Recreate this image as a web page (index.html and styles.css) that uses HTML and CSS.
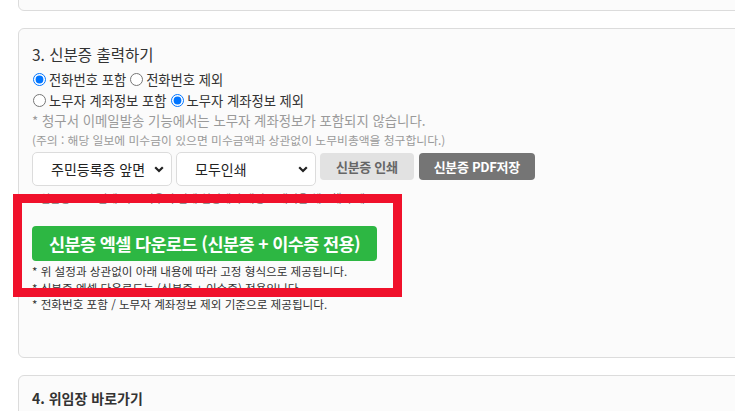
FILE: index.html
```html
<!DOCTYPE html>
<html lang="ko">
<head>
<meta charset="utf-8">
<link rel="stylesheet" href="styles.css">
</head>
<body>
<div class="page">
  <div class="card card-prev"></div>

  <div class="card">
    <h3 class="title">3. 신분증 출력하기</h3>
    <div class="radio-row">
      <label><input type="radio" name="tel" checked>전화번호 포함</label>
      <label><input type="radio" name="tel">전화번호 제외</label>
    </div>
    <div class="radio-row">
      <label><input type="radio" name="acc">노무자 계좌정보 포함</label>
      <label><input type="radio" name="acc" checked>노무자 계좌정보 제외</label>
    </div>
    <p class="note-gray">* 청구서 이메일발송 기능에서는 노무자 계좌정보가 포함되지 않습니다.</p>
    <p class="note-small">(주의 : 해당 일보에 미수금이 있으면 미수금액과 상관없이 노무비총액을 청구합니다.)</p>
    <div class="controls">
      <div class="select">
        <span>주민등록증 앞면</span>
        <svg width="10" height="7" viewBox="0 0 10 7"><path d="M1.2 1.2 L5 5 L8.8 1.2" fill="none" stroke="#222" stroke-width="2.2"/></svg>
      </div>
      <div class="select">
        <span>모두인쇄</span>
        <svg width="10" height="7" viewBox="0 0 10 7"><path d="M1.2 1.2 L5 5 L8.8 1.2" fill="none" stroke="#222" stroke-width="2.2"/></svg>
      </div>
      <button class="btn btn-light">신분증 인쇄</button>
      <button class="btn btn-dark">신분증 PDF저장</button>
    </div>
    <p class="note-hidden">* 신분증 PDF 인쇄 시 브라우저 인쇄 설정에서 배경 그래픽을 체크해 주세요.</p>
    <button class="btn-green">신분증 엑셀 다운로드 (신분증 + 이수증 전용)</button>
    <div class="notes">
      <p>* 위 설정과 상관없이 아래 내용에 따라 고정 형식으로 제공됩니다.</p>
      <p>* 신분증 엑셀 다운로드는 (신분증 + 이수증) 전용입니다.</p>
      <p>* 전화번호 포함 / 노무자 계좌정보 제외 기준으로 제공됩니다.</p>
    </div>
  </div>

  <div class="card">
    <h3 class="title-bold">4. 위임장 바로가기</h3>
  </div>

  <div class="highlight"></div>
</div>
</body>
</html>
```

FILE: styles.css
```css
* { box-sizing: border-box; }
html, body {
  margin: 0;
  padding: 0;
  background: #fff;
  overflow: hidden;
  height: 411px;
}
body {
  font-family: "Noto Sans CJK KR", "Noto Sans", sans-serif;
  color: #333;
}
.page {
  position: relative;
  display: flow-root;
  padding-left: 18px;
}
.card {
  background: #fbfbfb;
  border: 1px solid #dcdcdc;
  border-radius: 6px;
  margin-right: -20px;
  margin-bottom: 17px;
  padding: 14px 13px 44px 13px;
}
.card-prev {
  margin-top: -50px;
  height: 61px;
  padding: 0;
}
.title {
  margin: 0 0 4px 0;
  font-size: 15.5px;
  line-height: 22px;
  font-weight: 400;
  color: #333;
}
.title-bold {
  margin: 0;
  font-size: 14px;
  line-height: 16px;
  font-weight: 700;
  color: #333;
}
.radio-row {
  display: flex;
  align-items: center;
  height: 21px;
  font-size: 13.3px;
  color: #333;
}
.radio-row label {
  display: flex;
  align-items: center;
  margin-right: 3px;
}
.radio-row input {
  margin: 0 3px 0 1px;
  width: 13px;
  height: 13px;
}
.note-gray {
  margin: 0;
  font-size: 13.4px;
  line-height: 18px;
  color: #9a9a9a;
}
.note-small {
  margin: 0;
  font-size: 11.8px;
  line-height: 22px;
  color: #9a9a9a;
}
.controls {
  display: flex;
  align-items: flex-start;
  gap: 4px;
  margin-top: 1px;
}
.select {
  width: 140px;
  height: 34px;
  background: #fff;
  border: 1px solid #dcdcdc;
  border-radius: 5px;
  display: flex;
  align-items: center;
  justify-content: space-between;
  padding: 0 7px 0 18px;
  font-size: 14px;
  color: #222;
}
.btn {
  margin-top: 1px;
  height: 27px;
  border: none;
  border-radius: 4px;
  font-family: "Noto Sans CJK KR", sans-serif;
  font-size: 13px;
  font-weight: 700;
  padding: 0 16px;
  letter-spacing: -0.3px;
}
.btn-light {
  background: #e2e2e2;
  color: #666;
}
.btn-dark {
  margin-left: 1px;
  background: #757575;
  color: #fff;
  padding: 0 15px;
}
.note-hidden {
  margin: 4px 0 0 0;
  font-size: 11px;
  line-height: 16px;
  color: #777;
}
.btn-green {
  display: block;
  margin-top: 20px;
  width: 345px;
  height: 35px;
  background: #2db743;
  color: #fff;
  border: none;
  border-radius: 4px;
  font-family: "Noto Sans CJK KR", sans-serif;
  font-size: 17.5px;
  font-weight: 700;
  letter-spacing: -0.6px;
}
.notes {
  margin-top: 2px;
}
.notes p {
  margin: 0;
  font-size: 11.6px;
  line-height: 16.5px;
  color: #333;
}
.highlight {
  position: absolute;
  left: 13px;
  top: 194px;
  width: 389px;
  height: 103px;
  border: 9px solid #f0112b;
  pointer-events: none;
}
```
